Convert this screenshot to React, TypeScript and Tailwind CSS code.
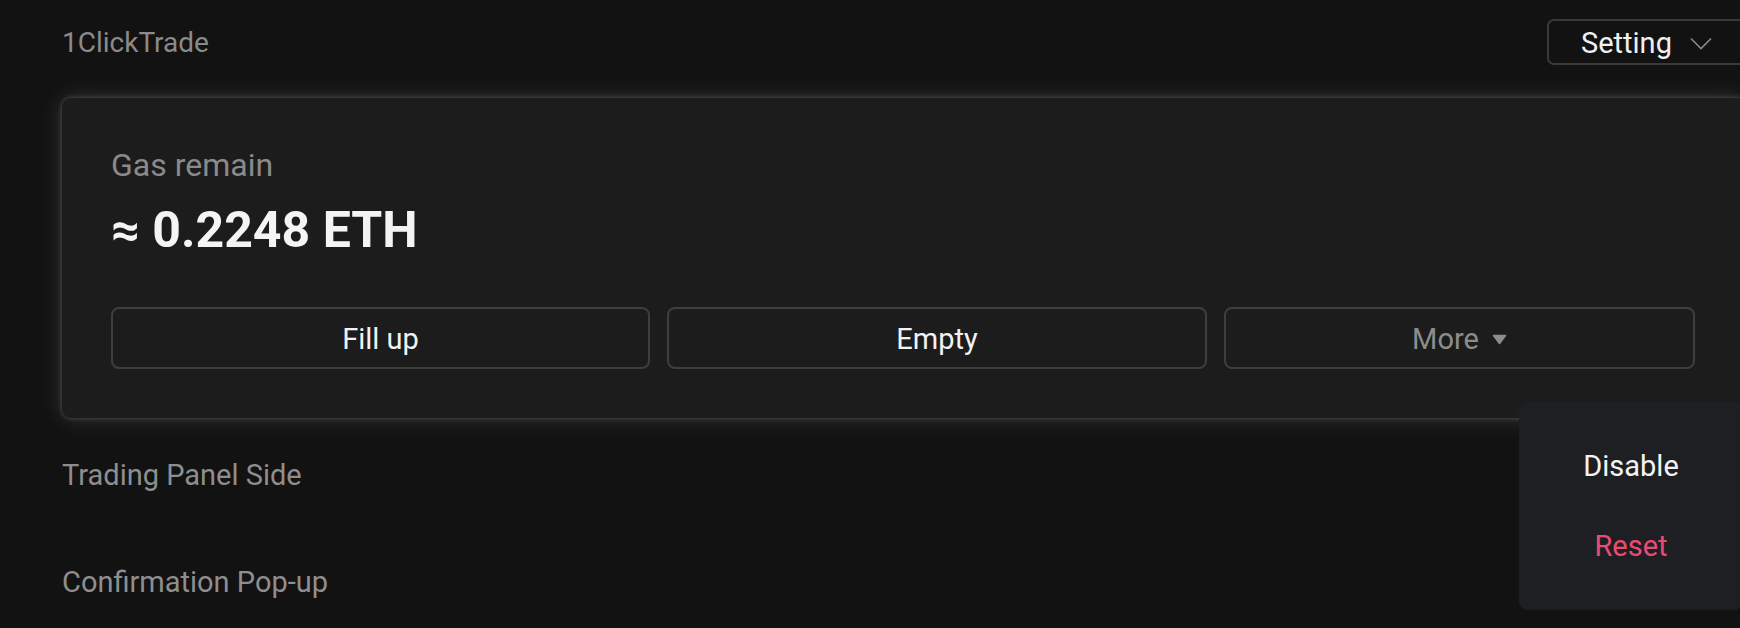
import React from 'react';

const font = { fontFamily: 'Roboto, "Noto Sans", sans-serif' };

function Chevron() {
  return (
    <svg width="22" height="13" viewBox="0 0 22 13" fill="none">
      <path d="M1 1.5 L11 11.5 L21 1.5" stroke="#8a8a8a" strokeWidth="1.6" />
    </svg>
  );
}

function Caret() {
  return (
    <svg width="15" height="11" viewBox="0 0 15 11">
      <path d="M1.5 1.5 H13.5 L7.5 9.5 Z" fill="#8c8c8c" stroke="#8c8c8c" strokeWidth="1.5" strokeLinejoin="round" />
    </svg>
  );
}

function ActionButton({ label, muted, icon, className = '' }: { label: string; muted?: boolean; icon?: React.ReactNode; className?: string }) {
  return (
    <button
      type="button"
      className={`h-[62px] pt-[3px] flex items-center justify-center gap-[13px] rounded-[8px] border-2 border-[#3e3e3e] text-[29px] ${
        muted ? 'text-[#8c8c8c]' : 'text-[#f2f2f2]'
      } ${className}`}
    >
      <span>{label}</span>
      {icon}
    </button>
  );
}

export default function App() {
  return (
    <div className="relative w-[1740px] h-[628px] overflow-hidden bg-[#121212]" style={font}>
      <div className="w-[1690px] pl-[62px] pt-[19px] box-content">
        {/* header */}
        <div className="flex items-center justify-between h-[46px]">
          <span className="pt-[2px] text-[28px] leading-[34px] text-[#8a8a8a]">1ClickTrade</span>
          <button
            type="button"
            className="h-[46px] w-[205px] pt-[3px] flex items-center pl-[32px] gap-[18px] rounded-[7px] border-2 border-[#3a3a3a] text-[29px] text-[#f0f0f0]"
          >
            <span>Setting</span>
            <Chevron />
          </button>
        </div>

        {/* gas card */}
        <div className="mt-[33px] w-[1684px] h-[320px] rounded-[9px] bg-[#1c1c1c] shadow-[0_0_5px_rgba(255,255,255,0.24),0_0_24px_rgba(255,255,255,0.14)] pl-[49px] pt-[48px]">
          <div className="text-[32px] leading-[38px] text-[#8a8a8a]">Gas remain</div>
          <div className="mt-[16px] text-[50px] leading-[60px] font-bold text-[#f4f4f4]">≈ 0.2248 ETH</div>
          <div className="mt-[47px] flex gap-[17px]">
            <ActionButton label="Fill up" className="w-[539px]" />
            <ActionButton label="Empty" className="w-[540px]" />
            <ActionButton label="More" muted icon={<Caret />} className="w-[471px]" />
          </div>
        </div>

        {/* rows */}
        <div className="mt-[40px] text-[29px] leading-[34px] text-[#8e8e8e]">Trading Panel Side</div>
        <div className="mt-[73px] text-[29px] leading-[34px] text-[#8e8e8e]">Confirmation Pop-up</div>
      </div>

      {/* dropdown menu */}
      <div className="absolute left-[1519px] top-[402px] w-[224px] rounded-[9px] bg-[#1e1f23] pt-[25px] pb-[23px] text-[29px]">
        <div className="h-[80px] flex items-center justify-center text-[#f4f4f4]">Disable</div>
        <div className="h-[80px] flex items-center justify-center text-[#ea4b72]">Reset</div>
      </div>
    </div>
  );
}
